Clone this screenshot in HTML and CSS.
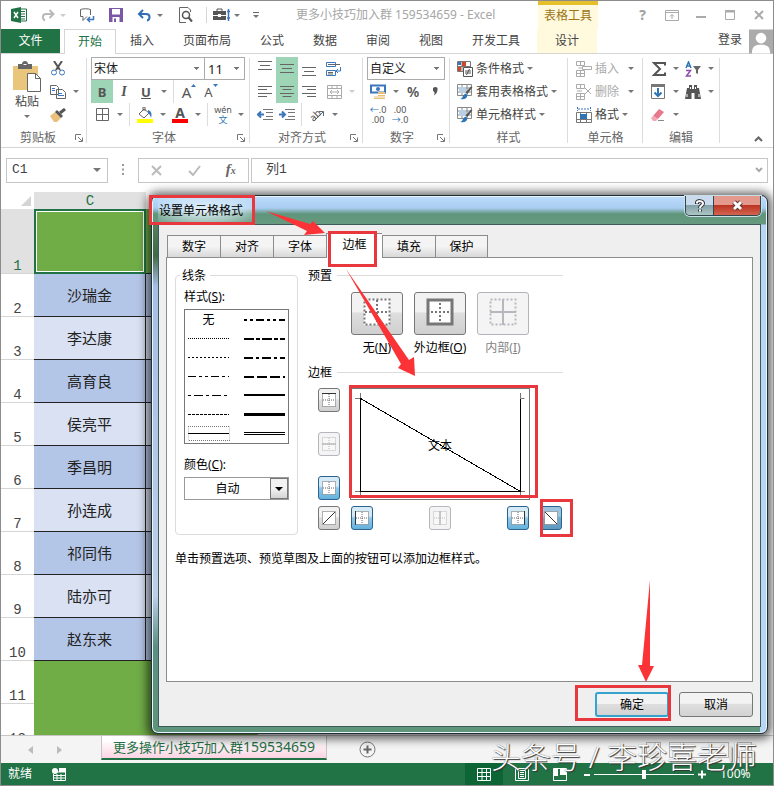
FILE: index.html
```html
<!DOCTYPE html>
<html lang="zh-CN">
<head>
<meta charset="utf-8">
<title>更多小技巧加入群 159534659 - Excel</title>
<link rel="stylesheet" href="styles.css">
</head>
<body>
<svg class="defs" aria-hidden="true">
  <symbol id="bx" viewBox="0 0 14 14"><rect x=".5" y=".5" width="13" height="13" fill="#fff" stroke="#666" stroke-dasharray="1 1"/><path d="M7 1v12M1 7h12" stroke="#666" stroke-dasharray="1 1"/></symbol>
  <symbol id="launch" viewBox="0 0 8 8"><path d="M.5 6V.5H6M3 3l4 4M7.500 3.500v4h-4" fill="none" stroke="#777"/></symbol>
  <symbol id="brushcell" viewBox="0 0 16 16"><path d="M.5.5h14v11H.500zM.500 4h14M.500 8h14M5 .500v11M10 .500v11" fill="#fff" stroke="#888"/><path d="M2 3h7v6H2z" fill="#b9cfe6"/><path d="M15.500 3l-5 7-2-1.500 5.500-6z" fill="#555"/><path d="M3 15c3 0 2-4 5.500-5.500l2 1.500C10 15 7 16 3 15z" fill="#2f75b5"/></symbol>
</svg>
<div class="app">
  <header class="titlebar">
    <div class="quick">
      <svg class="logo" width="16" height="16" viewBox="0 0 16 16"><path d="M9 2h6.500v12H9" fill="#fff" stroke="#217346"/><path d="M10 4.500h4M10 7h4M10 9.500h4M10 12h4" stroke="#217346"/><path d="M0 2l10-2v16L0 14z" fill="#217346"/><path d="M3 5l4 6M7 5l-4 6" stroke="#fff" stroke-width="1.500"/></svg>
      <button class="q redo" aria-label="恢复"><svg width="14" height="13" viewBox="0 0 14 13"><path d="M12 5H5C1 5 1 10 4 11.500M8.500 1L12.500 5 8.500 9" fill="none" stroke="#b9b9b9" stroke-width="2"/></svg><i class="tri pale"></i></button>
      <button class="q touch" aria-label="批注"><svg width="16" height="15" viewBox="0 0 16 15"><path d="M11.500 7V1.500C9 .5 4 .5 1.500 1.500v7H4v4l4-4" fill="none" stroke="#666"/><path d="M14.500 8v3.500H9M11 9l-2.500 2.500L11 14" fill="none" stroke="#3b76bd" stroke-width="1.500"/></svg></button>
      <button class="q save" aria-label="保存"><svg width="14" height="14" viewBox="0 0 14 14"><path d="M0 0h14v14H0z" fill="#7b57a7"/><path d="M3 1h8v5.500H3zM3.500 9h7v5h-7z" fill="#fff"/><path d="M5 10.500h2V14H5z" fill="#7b57a7"/></svg></button>
      <button class="q undo" aria-label="撤消"><svg width="15" height="13" viewBox="0 0 15 13"><path d="M2 5h7c5 0 4 6 1 6.500M6 1L2 5l4 4" fill="none" stroke="#2f6db5" stroke-width="2"/></svg><i class="tri"></i></button>
      <button class="q preview" aria-label="打印预览"><svg width="15" height="16" viewBox="0 0 15 16"><path d="M12.500 5V3l-2.500-2.500H1.500v15H8" fill="none" stroke="#666"/><circle cx="8" cy="8" r="3.500" fill="none" stroke="#555" stroke-width="1.500"/><path d="M10.500 10.500L14 14.500" stroke="#555" stroke-width="2"/></svg></button>
      <span class="rule"></span>
      <button class="q tools" aria-label="工具"><svg width="18" height="14" viewBox="0 0 18 14"><path d="M0 3h13v4H0zM0 8h13v4H0z" fill="#555"/><path d="M4 3V1h5v2" fill="none" stroke="#555"/><path d="M5 6h3v3H5z" fill="#fff"/><path d="M15.500 1v12M14 3.500h3M14 10h3" stroke="#3b76bd" stroke-width="1.500"/></svg><i class="tri"></i></button>
      <button class="q more" aria-label="自定义快速访问工具栏"><i class="bar"></i><i class="tri"></i></button>
      <h1 class="doc">更多小技巧加入群 159534659 - Excel</h1>
    </div>
    <div class="context">表格工具</div>
    <div class="winbtns">
      <button aria-label="帮助"><b>?</b></button>
      <button aria-label="功能区显示选项"><svg width="14" height="11" viewBox="0 0 14 11"><path d="M.5.500h13v10H.500zM.500 2.500h13M7 9V4.500M5 6.500l2-2 2 2" fill="none" stroke="#aaa"/></svg></button>
      <button aria-label="最小化"><svg width="10" height="11" viewBox="0 0 10 11"><path d="M0 7h10" stroke="#aaa" stroke-width="2"/></svg></button>
      <button aria-label="最大化"><svg width="10" height="10" viewBox="0 0 10 10"><path d="M.5.500h9v9h-9z" fill="none" stroke="#aaa"/><path d="M0 1.500h10" stroke="#aaa" stroke-width="2"/></svg></button>
      <button aria-label="关闭"><svg width="10" height="10" viewBox="0 0 10 10"><path d="M1 1l8 8M9 1L1 9" stroke="#aaa" stroke-width="2"/></svg></button>
    </div>
  </header>

  <nav class="tabs">
    <button class="file">文件</button>
    <button class="home">开始</button>
    <button>插入</button><button>页面布局</button><button>公式</button><button>数据</button><button>审阅</button><button>视图</button><button>开发工具</button>
    <button class="design">设计</button>
    <a class="signin" href="#">登录</a>
    <svg class="avatar" width="24" height="25" viewBox="0 0 25 25"><path d="M0 0h25v25H0z" fill="#ababab"/><circle cx="12.500" cy="9" r="5.500" fill="#fff"/><path d="M3 25c0-8 4-9 9.500-9s9.500 1 9.500 9z" fill="#fff"/></svg>
  </nav>

  <section class="ribbon">
    <div class="group clip">
      <div class="cliprow">
        <button class="paste"><svg width="29" height="32" viewBox="0 0 29 32"><path d="M0 5h25v24H0z" fill="#eac67c"/><path d="M5 8V3h4c0-4 6-4 6 0h4v5z" fill="#666"/><path d="M10.500 3.500h3" stroke="#fff"/><path d="M14.500 12.500h8l5 5v13h-13z" fill="#fff" stroke="#666"/><path d="M22.500 12.500v5h5" fill="none" stroke="#666"/></svg><span>粘贴</span><i class="tri"></i></button>
        <div class="stack">
          <div class="row"><button class="ib" aria-label="剪切"><svg width="14" height="15" viewBox="0 0 14 15"><path d="M3 0l6 9M11 0L5 9" stroke="#555" stroke-width="2"/><circle cx="3" cy="11.500" r="2.500" fill="none" stroke="#3b76bd"/><circle cx="11" cy="11.500" r="2.500" fill="none" stroke="#3b76bd"/></svg></button></div>
          <div class="row"><button class="ib" aria-label="复制"><svg width="16" height="14" viewBox="0 0 16 14"><path d="M.5.500h6l2 2v7h-8zM6.500 4.500h6l3 3v6h-9z" fill="#fff" stroke="#666"/><path d="M2 3.500h3M2 5.500h3M8 8.500h4M8 10.500h6" stroke="#3b76bd"/></svg></button><button class="dd" aria-label="复制选项"></button></div>
          <div class="row"><button class="ib" aria-label="格式刷"><svg width="16" height="14" viewBox="0 0 16 14"><path d="M0 8l5-4 6 6-4 4H4z" fill="#eac07a"/><path d="M5 4l2-2 6 6-2 2z" fill="#555"/><path d="M10 5l5-4" stroke="#555" stroke-width="3"/></svg></button></div>
        </div>
      </div>
      <div class="cap"><span>剪贴板</span><svg width="8" height="8"><use href="#launch"/></svg></div>
    </div>

    <div class="group">
      <div class="row"><select class="font" aria-label="字体"><option>宋体</option></select><select class="size" aria-label="字号"><option>11</option></select></div>
      <div class="row"><button class="ib on bold">B</button><button class="ib ital">I</button><button class="ib und">U</button><button class="dd" aria-label="下划线选项"></button><span class="vr"></span><button class="ib big" aria-label="增大字号">A<svg width="5" height="4"><path d="M0 3l2.500-3L5 3z" fill="#3b76bd"/></svg></button><button class="ib small" aria-label="减小字号">A<svg width="5" height="4"><path d="M0 0l2.500 3L5 0z" fill="#3b76bd"/></svg></button></div>
      <div class="row"><button class="ib" aria-label="边框"><svg width="13" height="13"><path d="M.5.500h12v12H.500zM6.500 0v13M0 6.500h13" fill="none" stroke="#666"/></svg></button><button class="dd" aria-label="边框选项"></button><span class="vr"></span><button class="ib" aria-label="填充颜色"><svg width="16" height="16" viewBox="0 0 16 16"><path d="M0 12h16v4H0z" fill="#ff0"/><path d="M7 2L2 7l5 4 5-5zM6 4V0h2v4" fill="#fff" stroke="#666"/><path d="M11 3c4 1 4 5 3 8-1-4-2-4-3-4z" fill="#3b76bd"/></svg></button><button class="dd" aria-label="填充选项"></button><button class="ib fc" aria-label="字体颜色">A</button><button class="dd" aria-label="字体颜色选项"></button><span class="vr"></span><button class="ib wen"><span>wén</span><em>文</em></button><button class="dd" aria-label="拼音选项"></button></div>
      <div class="cap"><span>字体</span><svg width="8" height="8"><use href="#launch"/></svg></div>
    </div>

    <div class="group">
      <div class="row"><button class="ib" aria-label="顶端对齐"><svg width="14" height="15"><path d="M0 .5h14M2 4.500h10M0 8.500h14" stroke="#666"/></svg></button><button class="ib on" aria-label="垂直居中"><svg width="14" height="15"><path d="M0 3.500h14M2 7.500h10M0 11.500h14" stroke="#666"/></svg></button><button class="ib" aria-label="底端对齐"><svg width="14" height="15"><path d="M0 6.500h14M2 10.500h10M0 14.500h14" stroke="#666"/></svg></button><button class="ib wrap" aria-label="自动换行"><svg width="16" height="16" viewBox="0 0 16 16"><path d="M.500 1.500h9v4h-9zM.500 9.500h9v5h-9z" fill="none" stroke="#3b76bd"/><path d="M2 3.500h12M2 11.500h5M2 13h5" stroke="#666"/><path d="M14.500 6v4H10M12 8l-2 2 2 2" fill="none" stroke="#3b76bd"/></svg></button></div>
      <div class="row"><button class="ib" aria-label="左对齐"><svg width="14" height="11"><path d="M0 .5h14M0 3.500h9M0 7.500h14M0 10.500h9" stroke="#666"/></svg></button><button class="ib on" aria-label="居中"><svg width="14" height="11"><path d="M0 .5h14M2.500 3.500h9M0 7.500h14M2.500 10.500h9" stroke="#666"/></svg></button><button class="ib" aria-label="右对齐"><svg width="14" height="11"><path d="M0 .5h14M5 3.500h9M0 7.500h14M5 10.500h9" stroke="#666"/></svg></button><button class="ib wrap" aria-label="合并后居中"><svg width="15" height="14"><path d="M.5.500h14v13H.500zM0 3.500h15M0 10.500h15M5 0v3M10 0v3M5 11v3M10 11v3M3 7h9M5 5L3 7l2 2M10 5l2 2-2 2" fill="none" stroke="#aaa"/></svg></button><button class="dd off" aria-label="合并选项"></button></div>
      <div class="row"><button class="ib" aria-label="减少缩进"><svg width="16" height="11"><path d="M6 .500h10M9 3.500h7M9 7.500h7M6 10.500h10" stroke="#777"/><path d="M7 5.500H1M4 2.500l-3 3 3 3" fill="none" stroke="#3b76bd" stroke-width="2"/></svg></button><button class="ib" aria-label="增加缩进"><svg width="16" height="11"><path d="M6 .500h10M9 3.500h7M9 7.500h7M6 10.500h10" stroke="#777"/><path d="M0 5.500h6M3 2.500l3 3-3 3" fill="none" stroke="#3b76bd" stroke-width="2"/></svg></button><span class="vr"></span><button class="ib orient" aria-label="方向"><span>ab</span><svg width="14" height="12"><path d="M3 12L12 3M8 2.500h4.500V7" fill="none" stroke="#666"/></svg></button><button class="dd" aria-label="方向选项"></button></div>
      <div class="cap"><span>对齐方式</span><svg width="8" height="8"><use href="#launch"/></svg></div>
    </div>

    <div class="group">
      <div class="row"><select class="num" aria-label="数字格式"><option>自定义</option></select></div>
      <div class="row"><button class="ib" aria-label="会计数字格式"><svg width="16" height="16" viewBox="0 0 16 16"><path d="M1 1.500h14v7H1z" fill="#fff" stroke="#3b76bd" stroke-width="2"/><circle cx="8" cy="5" r="2" fill="#3b76bd"/><path d="M8 8h7v7H4v-3h4z" fill="#eac07a"/><path d="M8 10.500h7M4 13h11" stroke="#fff"/></svg></button><button class="dd" aria-label="会计选项"></button><button class="ib pct">%</button><button class="ib comma" aria-label="千位分隔样式"><svg width="5" height="9"><path d="M0 1q2.500-2 4.500 0Q5 6 1 8.500 2.500 5 0 4z" fill="#555"/></svg></button></div>
      <div class="row"><button class="ib dec"><span><em>←</em>.0</span><span>.00</span></button><button class="ib dec"><span>.00</span><span><em>→</em>.0</span></button></div>
      <div class="cap"><span>数字</span><svg width="8" height="8"><use href="#launch"/></svg></div>
    </div>

    <div class="group wide">
      <div class="row"><button class="tb"><svg width="16" height="16"><path d="M.5.500h13v10H.500zM0 5.500h14M5 0v10" fill="#fff" stroke="#777"/><path d="M5 1h4v4H5zM1 6h3v4H1z" fill="#d24726"/><path d="M1 1h3v3H1z" fill="#3b76bd"/><path d="M6.500 6.500h9v9h-9z" fill="#fff" stroke="#555"/><path d="M8 10h6M8 12h6M12.500 8l-3 6" stroke="#555"/></svg>条件格式<i class="tri"></i></button></div>
      <div class="row"><button class="tb"><svg width="16" height="16"><use href="#brushcell"/></svg>套用表格格式<i class="tri"></i></button></div>
      <div class="row"><button class="tb"><svg width="16" height="16"><use href="#brushcell"/></svg>单元格样式<i class="tri"></i></button></div>
      <div class="cap"><span>样式</span></div>
    </div>

    <div class="group wide cells">
      <div class="row"><button class="tb dim"><svg width="16" height="16"><path d="M.5.500h8v4h-8zM4.500.500v4M.500 9.500h8v6h-8zM4.500 9.500v6M.500 12.500h8M2.500 7H6M6.500 5.500h9v3h-9z" fill="none" stroke="#aaa"/></svg>插入<i class="tri"></i></button></div>
      <div class="row"><button class="tb dim"><svg width="16" height="16"><path d="M.5.500h8v4h-8zM4.500.500v4M.500 9.500h8v6h-8zM4.500 9.500v6M.500 12.500h8M1 7h5M9 4l6 6M15 4l-6 6" fill="none" stroke="#aaa"/></svg>删除<i class="tri"></i></button></div>
      <div class="row"><button class="tb"><svg width="16" height="16"><path d="M1.500 0v4M14.500 0v4M2 2h11" stroke="#3b76bd" stroke-dasharray="2 1"/><path d="M.500 5.500h15v10H.500zM4.500 5v10M10.500 5v10M0 12.500h15" fill="#fff" stroke="#777"/><path d="M4 7h7v5H4z" fill="#2f75b5"/></svg>格式<i class="tri"></i></button></div>
      <div class="cap"><span>单元格</span></div>
    </div>

    <div class="group">
      <div class="row"><button class="ib" aria-label="自动求和"><svg width="15" height="16"><path d="M14 4.500V2H3l6 6-6 6h11v-2.500" fill="none" stroke="#555" stroke-width="2"/></svg></button><button class="dd" aria-label="求和选项"></button><button class="ib az" aria-label="排序和筛选"><svg width="16" height="16"><path d="M1 7l2.500-6L6 7M2 5h3" fill="none" stroke="#2f75b5" stroke-width="1.500"/><path d="M1 9.500h4.500L1.500 15H6" fill="none" stroke="#8a4fb0" stroke-width="1.500"/><path d="M8 5h8l-3 4v4l-2-1V9z" fill="#666"/></svg></button><button class="dd" aria-label="排序选项"></button></div>
      <div class="row"><button class="ib" aria-label="填充"><svg width="14" height="15"><path d="M.5.500h13v14H.500z" fill="#fff" stroke="#777"/><path d="M0 0h14v3H0z" fill="#777"/><path d="M7 4v8M3.500 8.500L7 12l3.500-3.500" fill="none" stroke="#2f75b5" stroke-width="2"/></svg></button><button class="dd" aria-label="填充选项"></button><button class="ib az" aria-label="查找和选择"><svg width="16" height="14"><path d="M2 3h2V0h3v4h2V0h3v3h2l2 11H9.500V8h-3v6H0z" fill="#555"/><path d="M2 9v3M14 9v3M5.500 2v2M10.500 2v2" stroke="#fff"/></svg></button><button class="dd" aria-label="查找选项"></button></div>
      <div class="row"><button class="ib" aria-label="清除"><svg width="14" height="13"><path d="M8 1l5 3-6 7-5-3z" fill="#e8788c"/><path d="M2 8l5 3-2 2H2L0 10z" fill="#f3a9b5"/><path d="M7 12.500h6" stroke="#888"/></svg></button><button class="dd" aria-label="清除选项"></button></div>
      <div class="cap"><span>编辑</span></div>
    </div>
    <button class="collapse" aria-label="折叠功能区"><svg width="9" height="6"><path d="M1 5l3.500-3.500L8 5" fill="none" stroke="#666" stroke-width="2"/></svg></button>
  </section>

  <section class="formula">
    <label class="namebox"><input value="C1" aria-label="名称框"><i class="tri wide-tri"></i></label>
    <svg width="2" height="12"><path d="M0 1h2M0 5.500h2M0 10h2" stroke="#999" stroke-width="2"/></svg>
    <div class="fx"><button aria-label="取消"><svg width="12" height="11"><path d="M1 1l9 9M10 1l-9 9" stroke="#bbb" stroke-width="2"/></svg></button><button aria-label="输入"><svg width="13" height="11"><path d="M1 6l4 4 7-9" fill="none" stroke="#bbb" stroke-width="2"/></svg></button><button class="fn">f<small>x</small></button></div>
    <label class="bar-input"><input value="列1" aria-label="编辑栏"><svg width="8" height="6"><path d="M1 1l3 3 3-3" fill="none" stroke="#aaa" stroke-width="2"/></svg></label>
  </section>

  <main class="sheet">
    <table>
      <colgroup><col class="c-num"><col class="c-c"><col class="c-c"><col></colgroup>
      <thead><tr><th class="corner"><svg width="10" height="10"><path d="M10 0v10H0z" fill="#d4d4d4"/></svg></th><th class="col">C</th><th></th><th></th></tr></thead>
      <tbody>
        <tr class="first"><th>1</th><td class="sel"></td><td></td></tr>
        <tr class="a"><th>2</th><td>沙瑞金</td><td></td></tr>
        <tr class="b"><th>3</th><td>李达康</td><td></td></tr>
        <tr class="a"><th>4</th><td>高育良</td><td></td></tr>
        <tr class="b"><th>5</th><td>侯亮平</td><td></td></tr>
        <tr class="a"><th>6</th><td>季昌明</td><td></td></tr>
        <tr class="b"><th>7</th><td>孙连成</td><td></td></tr>
        <tr class="a"><th>8</th><td>祁同伟</td><td></td></tr>
        <tr class="b"><th>9</th><td>陆亦可</td><td></td></tr>
        <tr class="a"><th>10</th><td>赵东来</td><td></td></tr>
        <tr class="g"><th>11</th><td></td><td></td></tr>
        <tr class="g"><th>12</th><td></td><td></td></tr>
      </tbody>
    </table>
  </main>

  <footer class="sheets">
    <button class="nav" aria-label="上一个"><svg width="5" height="8"><path d="M5 0v8L0 4z" fill="#bbb"/></svg></button>
    <button class="nav" aria-label="下一个"><svg width="5" height="8"><path d="M0 0v8l5-4z" fill="#bbb"/></svg></button>
    <button class="tab">更多操作小技巧加入群<span>159534659</span></button>
    <button class="add" aria-label="新工作表"><svg width="17" height="17"><circle cx="8.500" cy="8.500" r="7.500" fill="none" stroke="#777"/><path d="M8.500 4.500v8M4.500 8.500h8" stroke="#666" stroke-width="2"/></svg></button>
    <div class="hscroll"><i></i><i class="thumb"></i><i></i></div>
  </footer>

  <footer class="status">
    <span>就绪</span>
    <svg class="macro" width="14" height="13"><path d="M4 4h9.500v8.500h-12V6M2 7.500h11M2 10h11M5 6v6M9 6v6" fill="none" stroke="#fff"/><circle cx="3" cy="3" r="3" fill="#fff"/><path d="M7 0h7v4H7z" fill="#fff"/></svg>
    <div class="views">
      <button class="cur" aria-label="普通"><svg width="14" height="13"><path d="M.5.500h13v12H.500zM0 4.500h14M0 8.500h14M5 0v13M9.500 0v13" fill="none" stroke="#fff"/></svg></button>
      <button aria-label="页面布局"><svg width="14" height="13"><path d="M.5.500h13v12H.500zM3.500 2.500h7v8h-7zM5 4.500h4M5 6.500h4M5 8.500h4" fill="none" stroke="#fff"/></svg></button>
      <button aria-label="分页预览"><svg width="14" height="13"><path d="M.5.500h13v12H.500z" fill="none" stroke="#fff"/><path d="M1 1h4v7H1zM7 1h6v6H7z" fill="#fff"/></svg></button>
    </div>
    <button class="zm" aria-label="缩小"><svg width="6" height="9"><path d="M0 5h6" stroke="#fff" stroke-width="2"/></svg></button>
    <input class="zoom" type="range" min="0" max="100" value="50" aria-label="缩放">
    <button class="zm" aria-label="放大"><svg width="9" height="9"><path d="M0 4.500h8M4 .500v8" stroke="#fff" stroke-width="2"/></svg></button>
    <span class="pct100">100%</span>
  </footer>

  <section class="dialog" role="dialog" aria-labelledby="dlg">
    <header class="dtitle"><h2 id="dlg">设置单元格格式</h2><div class="dbtns"><button class="help" aria-label="帮助"><svg width="12" height="14"><path d="M3 5V3.500C3 1.500 9 1.500 9 4.500 9 6.500 6 6.500 6 9M6 10.500v2" fill="none" stroke="#333" stroke-width="4"/><path d="M3 4.500V3.500C3 1.500 9 1.500 9 4.500 9 6.500 6 6.500 6 9M6 10.500v2" fill="none" stroke="#fff" stroke-width="2"/></svg></button><button class="close" aria-label="关闭"><svg width="13" height="11"><path d="M3 2l7 7M10 2L3 9" stroke="#633" stroke-width="5"/><path d="M3 2l7 7M10 2L3 9" stroke="#fff" stroke-width="3"/></svg></button></div></header>
    <div class="client">
      <div class="dtabs" role="tablist"><button>数字</button><button>对齐</button><button>字体</button><button class="active">边框</button><button>填充</button><button>保护</button></div>
      <div class="page">
        <div class="cols">
          <fieldset class="lines">
            <legend>线条</legend>
            <p>样式(<u>S</u>):</p>
            <div class="styles" role="listbox" aria-label="样式">
              <span class="none">无</span><svg><path d="M0 10h41" stroke-width="2" stroke-dasharray="3 3 3 3 8 3"/></svg>
              <svg><path d="M0 9.500h41" stroke-dasharray="1 1"/></svg><svg><path d="M0 10h41" stroke-width="2" stroke-dasharray="10 2 4 2"/></svg>
              <svg><path d="M0 9.500h41" stroke-dasharray="2 2"/></svg><svg><path d="M0 10h41" stroke-width="2" stroke-dasharray="9 3 3 3"/></svg>
              <svg><path d="M0 9.500h41" stroke-dasharray="8 3 3 3 3 3"/></svg><svg><path d="M0 10h41" stroke-width="2" stroke-dasharray="10 3"/></svg>
              <svg><path d="M0 9.500h41" stroke-dasharray="3 3 9 3"/></svg><svg><path d="M0 9h41" stroke-width="2"/></svg>
              <svg><path d="M0 9.500h41" stroke-dasharray="3 1"/></svg><svg><path d="M0 9.500h41" stroke-width="3"/></svg>
              <svg class="picked"><path d="M0 9.500h41"/><rect x="0" y="2.500" width="42" height="14" fill="none" stroke="#777" stroke-dasharray="1 1"/></svg><svg><path d="M0 8.500h41M0 10.500h41"/></svg>
            </div>
            <label for="clr">颜色(<u>C</u>):</label>
            <div class="clr"><select id="clr"><option>自动</option></select><span></span></div>
          </fieldset>
          <div class="right">
            <div class="head">预置</div>
            <div class="presets">
              <div><button id="p1" class="pb"><svg width="28" height="28"><rect x="1" y="1" width="26" height="26" fill="#fff"/><path d="M1.500 1.500h25v25h-25zM14 2v24M2 14h24" fill="none" stroke="#777" stroke-width="2" stroke-dasharray="2 2"/></svg></button><label for="p1">无(<u>N</u>)</label></div>
              <div><button id="p2" class="pb"><svg width="28" height="28"><rect x="2" y="2" width="24" height="24" fill="#fff" stroke="#777" stroke-width="3"/><path d="M14 5v18M5 14h18" stroke="#777" stroke-width="2" stroke-dasharray="2 2"/></svg></button><label for="p2">外边框(<u>O</u>)</label></div>
              <div class="disabled"><button id="p3" class="pb" disabled><svg width="28" height="28"><path d="M1.500 1.500h25v25h-25z" fill="none" stroke="#bab6be" stroke-width="2" stroke-dasharray="2 2"/><path d="M14 1v26M1 14h26" stroke="#bab6be" stroke-width="2"/></svg></button><label for="p3">内部(<u>I</u>)</label></div>
            </div>
            <div class="head">边框</div>
            <div class="borders">
              <div class="vcol">
                <button class="sb" aria-label="上边框"><svg width="14" height="14"><use href="#bx"/><path d="M0 .500h14" stroke="#333"/></svg></button>
                <button class="sb off" disabled aria-label="水平内边框"><svg width="14" height="14"><use href="#bx"/><path d="M0 7h14" stroke="#333"/></svg></button>
                <button class="sb down" aria-label="下边框"><svg width="14" height="14"><use href="#bx"/></svg></button>
              </div>
              <svg class="pv" viewBox="0 0 180 112"><g fill="none" stroke="#777"><rect x=".5" y=".5" width="179" height="111"/><path d="M5 10.500h5.500V5M170.500 5v5.500h4M5 103.500h5.500v4M175 103.500h-4.500v4"/></g><path d="M10.500 11v92M170.500 11v92M10 103.500h161M10.500 10.500l160 93" stroke="#000" fill="none" shape-rendering="crispEdges"/><text x="90" y="62" text-anchor="middle">文本</text></svg>
              <button class="sb diag" aria-label="斜线上"><svg width="14" height="14"><rect x=".5" y=".5" width="13" height="13" fill="#fff" stroke="#666" stroke-dasharray="1 1"/><path d="M1 13L13 1" stroke="#333"/></svg></button>
              <div class="hrow">
                <button class="sb down" aria-label="左边框"><svg width="14" height="14"><use href="#bx"/><path d="M.5 0v14" stroke="#333"/></svg></button>
                <button class="sb off" disabled aria-label="垂直内边框"><svg width="14" height="14"><use href="#bx"/><path d="M7 0v14" stroke="#333"/></svg></button>
                <button class="sb down" aria-label="右边框"><svg width="14" height="14"><use href="#bx"/><path d="M13.500 0v14" stroke="#333"/></svg></button>
              </div>
              <button class="sb down focus" aria-label="斜线下"><svg width="14" height="14"><rect x=".5" y=".5" width="13" height="13" fill="#fff" stroke="#666" stroke-dasharray="1 1"/><path d="M1 1l12 12" stroke="#333"/></svg></button>
            </div>
          </div>
        </div>
        <p class="hint">单击预置选项、预览草图及上面的按钮可以添加边框样式。</p>
      </div>
      <div class="actions"><button class="ok">确定</button><button>取消</button></div>
    </div>
  </section>

  <svg class="marks" width="774" height="786" aria-hidden="true">
    <g fill="none" stroke="#e8383d" stroke-width="3"><path d="M150.500 196.500h103v27h-103zM329.500 232.500h46v33h-46zM350.500 386.500h186v110h-186zM541.500 500.500h30v35h-30zM576.500 686.500h93v33h-93z"/></g>
    <g fill="#fb3336"><path d="M266 211L310 224 313 221 325 233 304 235 307 231zM346 269L409 360 414 357 415 376 398 368 401 364zM650 580L650 666 654 666 646 682 638 665 642 665z"/></g>
  </svg>
  <div class="stamp">头条号 / 李珍喜老师</div>
</div>
</body>
</html>
```
FILE: styles.css
```css
* { box-sizing: border-box; }
body { margin: 0; overflow: hidden; font: 12px/16px "Noto Sans", "Noto Sans CJK SC", sans-serif; color: #444; }
button, input, select { font: inherit; color: inherit; border: 0; padding: 0; margin: 0; background: none; border-radius: 0; outline: 0; }
svg { display: block; flex: none; }
.defs { position: absolute; width: 0; height: 0; }
.app { position: relative; display: flex; flex-direction: column; height: 100vh; border: 1px solid #8c8c8c; background: #fff; overflow: hidden; }
.tri { display: inline-block; border: 3px solid transparent; border-top-color: #777; border-bottom: 0; }
.tri.pale { border-top-color: #ccc; }

/* Title bar */
.titlebar { display: flex; height: 28px; flex: none; }
.quick { display: flex; align-items: center; width: 537px; flex: none; padding-left: 10px; }
.q { display: flex; align-items: center; gap: 5px; height: 28px; }
.redo { margin-left: 14px; }
.touch { margin-left: 13px; }
.save { margin-left: 14px; }
.undo { margin-left: 14px; }
.preview { margin-left: 15px; }
.rule { width: 1px; height: 16px; margin: 0 6px 0 13px; background: #d5d5d5; }
.tools { gap: 3px; }
.more { flex-direction: column; justify-content: center; gap: 2px; margin-left: 13px; }
.bar { width: 6px; height: 1px; background: #666; }
.doc { margin: 0 0 0 37px; font-size: 12px; font-weight: 400; color: #a6a6a6; white-space: nowrap; }
.context { width: 60px; flex: none; border-top: 4px solid #e6c02c; background: #fff9de; color: #9c7416; text-align: center; line-height: 22px; }
.winbtns { display: flex; align-items: center; margin-left: auto; }
.winbtns button { display: flex; align-items: center; justify-content: center; width: 29px; height: 28px; color: #a0a0a0; font-size: 14px; }

/* Ribbon tabs */
.tabs { display: flex; gap: 1px; height: 25px; flex: none; border-bottom: 1px solid #d5d5d5; }
.tabs button { padding: 0 14px; white-space: nowrap; }
.tabs .file { width: 59px; background: #217346; color: #fff; }
.tabs .home { width: 52px; height: 25px; margin-left: 3px; padding: 0 0 1px; border: 1px solid #d5d5d5; border-bottom: 0; background: #fff; color: #217346; }
.tabs button:nth-child(3) { margin-left: -1px; }
.tabs .design { width: 60px; margin-left: 2px; padding: 0; background: #fff9de; }
.signin { margin-left: auto; color: #444; text-decoration: none; line-height: 22px; }
.avatar { margin-left: 6px; }

/* Ribbon */
.ribbon { position: relative; display: grid; grid-template-columns: 86px 163px 113px 87px 118px 75px 77px 1fr; height: 94px; flex: none; border-bottom: 1px solid #d5d5d5; }
.group { position: relative; padding: 3px 0 0 4px; }
.group::after { content: ""; position: absolute; right: 0; top: 4px; bottom: 4px; width: 1px; background: #dcdcdc; }
.row { display: flex; align-items: center; height: 23px; }
.ib { display: flex; align-items: center; justify-content: center; width: 22px; height: 23px; flex: none; color: #555; }
.on { background: #9fd5b7; }
.dd { width: 13px; height: 23px; display: flex; align-items: center; justify-content: center; }
.dd::after { content: ""; border: 3px solid transparent; border-top-color: #777; border-bottom: 0; }
.dd.off::after { border-top-color: #ccc; }
.vr { width: 1px; height: 23px; margin: 0 4px 0 3px; background: #dcdcdc; }
.cap { display: flex; align-items: center; height: 21px; padding: 2px 5px 0 0; color: #666; }
.cap span { flex: 1; text-align: center; }
.clip { padding-left: 0; }
.clip .cap { padding-right: 4px; }
.cliprow { display: flex; }
.paste { display: flex; flex-direction: column; align-items: center; width: 46px; height: 69px; padding: 4px 0 0 6px; }
.paste span { line-height: 18px; }
.paste .tri { margin-top: 4px; }
.ribbon select { height: 23px; padding: 0 4px; border: 1px solid #ababab; appearance: none; color: #222; background: linear-gradient(#777, #777) right 5px top 9px / 5px 1px no-repeat, linear-gradient(#777, #777) right 6px top 10px / 3px 1px no-repeat, linear-gradient(#777, #777) right 7px top 11px / 1px 1px no-repeat, #fff; }
.ribbon select.font { width: 114px; padding-left: 2px; }
.ribbon select.size { width: 41px; margin-left: -1px; padding-left: 3px; }
.ribbon select.num { width: 78px; padding-left: 2px; }
.ribbon select.size, .bold, .ital, .und { font-size: 13px; }
.bold { font-weight: 700; }
.ital { font-family: "Liberation Serif", serif; font-style: italic; font-weight: 700; font-size: 14px; }
.und { font-weight: 700; text-decoration: underline; }
.big, .small { align-items: center; font-size: 15px; }
.small { font-size: 13px; }
.big svg, .small svg { align-self: flex-start; margin-top: 4px; }
.fc { height: 17px; border-bottom: 4px solid #f00; width: 16px; margin: 0 3px; font-size: 14px; line-height: 14px; font-weight: 700; }
.wen { flex-direction: column; font-size: 9px; line-height: 10px; }
.wen em { color: #2f75b5; font-style: normal; }
.wrap { margin-left: 3px; }
.orient { font-size: 10px; }
.orient span { transform: rotate(-45deg); margin-right: -9px; }
.pct { font-size: 14px; font-weight: 600; }
.dec { flex-direction: column; align-items: center; font-size: 9px; line-height: 10px; }
.dec em { color: #2f75b5; font-style: normal; }
.wide { padding-left: 7px; }
.cells { padding-left: 8px; }
.tb { display: flex; align-items: center; gap: 3px; height: 23px; white-space: nowrap; }
.dim { color: #aaa; }
.cells .dim .tri { margin-left: 6px; }
.wide .cap { padding-right: 8px; }
.collapse { align-self: end; justify-self: end; padding: 0 10px 5px 0; }

/* Formula bar */
.formula { display: flex; align-items: center; gap: 14px; height: 44px; flex: none; padding: 0 5px; font-family: "Liberation Mono", "Noto Sans CJK SC", monospace; font-size: 13px; }
.formula input { flex: 1; min-width: 0; width: 0; }
.namebox, .fx, .bar-input { display: flex; align-items: center; height: 25px; border: 1px solid #c6c6c6; }
.namebox { width: 102px; padding: 0 6px 0 5px; }
.wide-tri { border-width: 4px 4px 0; }
.fx { width: 111px; justify-content: space-around; }
.fn { font: italic 700 15px/20px "Liberation Serif", serif; color: #666; }
.fn small { font-size: 10px; }
.bar-input { flex: 1; margin-left: -12px; padding: 0 4px 0 14px; }

/* Worksheet */
.sheet { flex: 1; min-height: 0; overflow: hidden; background: #fff; }
table { width: 100%; table-layout: fixed; border-collapse: separate; border-spacing: 0; }
.c-num { width: 33px; }
.c-c { width: 112px; }
th, td { padding: 0; }
thead th { height: 17px; font: 14px/16px "Liberation Mono", monospace; color: #217346; }
.corner { text-align: right; }
.corner svg { margin-left: auto; margin-right: 3px; }
.col { background: #e1e1e1; }
tbody tr { height: 43px; }
tbody th { height: 43px; border-bottom: 1px solid #d5d5d5; vertical-align: bottom; font: 14px/13px "Liberation Mono", monospace; color: #444; text-align: center; }
tbody td { border-right: 1px solid #222; border-bottom: 1px solid #222; text-align: center; font-size: 15px; color: #222; }
.first th { height: 65px; background: #e1e1e1; color: #217346; }
.first td { background: #70ad47; }
.first .sel { border: 2px solid #217346; box-shadow: inset 0 0 0 1px #fff; }
.a td { background: #b4c6e7; }
.b td { background: #d9e1f2; }
.g td { background: #70ad47; border: 0; }

/* Sheet tabs and status bar */
.sheets { display: flex; align-items: center; height: 28px; flex: none; background: #f4f4f4; border-top: 1px solid #c6c6c6; padding-left: 27px; }
.nav { width: 5px; margin-right: 24px; }
.tab { width: 226px; height: 24px; align-self: flex-start; margin-left: 15px; border: 1px solid #c6c6c6; border-top: 0; border-bottom: 2px solid #217346; background: linear-gradient(#fff 20%, #fbd3e2); color: #217346; font-size: 13px; white-space: nowrap; }
.tab span { font-size: 14px; }
.add { margin-left: 32px; }
.hscroll { display: flex; gap: 8px; margin-left: auto; margin-right: 21px; }
.hscroll i { width: 15px; height: 16px; border: 1px solid #b5b5b5; }
.hscroll .thumb { width: 60px; }
.status { display: flex; align-items: center; height: 22px; flex: none; background: #217346; color: #fff; padding: 0 20px 0 7px; }
.macro { margin-left: 20px; }
.views { display: flex; margin-left: auto; }
.views button { display: flex; align-items: center; justify-content: center; width: 38px; height: 22px; }
.views .cur { background: #0d6434; }
.zm { margin: 0 4px; }
.views + .zm { margin-left: 5px; }
.zoom { width: 100px; height: 16px; appearance: none; background: linear-gradient(#fff, #fff) center / 100% 1px no-repeat; }
.zoom::-webkit-slider-thumb { appearance: none; width: 4px; height: 9px; background: #fff; }
.pct100 { margin-left: 9px; width: 33px; }

/* Format cells dialog */
.dialog { position: absolute; isolation: isolate; left: 150px; right: 5px; top: 194px; padding: 0 6px 6px; color: #000; border: 1px solid #1f3038; border-radius: 7px; background: linear-gradient(#bcdcfb 0, #a9cdf2 12px, #5f957a 18px, #679a80 28px, transparent 29px), linear-gradient(#5f957a 0, #426a45 60px, #a6bfe6 90px, #bccfea 400px, #5c8f84 450px, #5f957a) left / 7px 100% no-repeat, linear-gradient(#b9d5f5, #b9d5f5) right / 7px 100% no-repeat, #5f957a; box-shadow: inset 0 0 0 1px #e9f4fb, 0 1px 10px 4px rgba(0, 0, 0, .6); }
.dtitle { display: flex; height: 28px; }
.dtitle h2 { margin: 0; padding: 0 9px 0 1px; font-size: 12px; line-height: 29px; font-weight: 400; background: radial-gradient(#e4f1fa, rgba(220, 238, 248, .5) 60%, transparent); white-space: nowrap; }
.dbtns { display: flex; height: 20px; margin-left: auto; border: 1px solid #334650; border-top: 0; border-radius: 0 0 5px 5px; overflow: hidden; box-shadow: 0 0 0 1px #c7dfe8; }
.dbtns button { display: flex; align-items: center; justify-content: center; }
.help { width: 27px; background: linear-gradient(#cadbed 45%, #83a1aa 50%, #adc6c4); }
.close { width: 47px; border-left: 1px solid #334650 !important; background: linear-gradient(#e39a8d 45%, #bc3522 50%, #d26450); }
.client { border: 1px solid #3e5a5a; background: #efefef; padding: 8px 7px 9px 7px; }
.dtabs { display: flex; align-items: flex-end; height: 24px; padding-left: 1px; }
.dtabs button { width: 53px; height: 22px; border: 1px solid #8c8c8c; border-bottom: 0; border-right-width: 0; background: linear-gradient(#f4f4f4 50%, #d8d8d8); }
.dtabs .active { width: 56px; height: 25px; margin-bottom: -1px; padding-bottom: 3px; background: #fff; z-index: 1; }
.dtabs button:last-child { border-right-width: 1px; }
.page { min-height: 425px; border: 1px solid #8c8c8c; background: #fff; padding: 9px 8px; }
.cols { display: flex; gap: 10px; }
.lines { width: 122px; height: 268px; flex: none; margin: 0; padding: 5px 8px 0; border: 1px solid #dcdcdc; border-radius: 4px; }
.lines legend { padding: 0 4px 0 2px; margin-left: -4px; line-height: 17px; }
.lines p { margin: 0 0 4px; }
.lines label { display: block; margin: 13px 0 4px; }
.styles { display: grid; grid-template-columns: 41px 41px; grid-auto-rows: 19px; column-gap: 15px; width: 105px; padding-left: 3px; border: 1px solid #777; }
.styles svg { width: 42px; height: 19px; stroke: #000; }
.none { text-align: center; line-height: 19px; }
.clr { display: flex; width: 105px; height: 23px; border: 1px solid #999; }
.clr select { flex: 1; min-width: 0; appearance: none; text-align: center; text-align-last: center; }
.clr span { display: flex; align-items: center; justify-content: center; width: 18px; border: 1px solid #777; background: linear-gradient(#f2f2f2 50%, #d4d4d4); pointer-events: none; }
.clr span::after { content: ""; border: 4px solid transparent; border-top-color: #000; border-bottom: 0; }
.right { width: 255px; }
.head { display: flex; align-items: center; gap: 5px; line-height: 17px; }
.head::after { content: ""; flex: 1; height: 1px; background: #dcdcdc; }
.presets { display: flex; gap: 11px; padding: 8px 0 8px 43px; }
.presets > div { display: flex; flex-direction: column; align-items: center; width: 52px; gap: 5px; white-space: nowrap; }
.pb { display: flex; align-items: center; justify-content: center; width: 52px; height: 43px; border: 1px solid #777; border-radius: 3px; padding-bottom: 4px; background: linear-gradient(#f2f2f2 45%, #dedede 50%, #cfcfcf); }
.disabled { color: #838383; }
.disabled .pb { border-color: #b5b2b9; background: #f4f4f4; }
.borders { display: grid; grid-template-columns: 22px 180px 22px; grid-template-rows: 112px 24px; gap: 6px 10px; padding: 7px 0 0 10px; }
.vcol { display: flex; flex-direction: column; justify-content: space-between; }
.hrow { display: flex; justify-content: space-between; padding: 0 1px; }
.sb { display: flex; align-items: center; justify-content: center; width: 22px; height: 24px; border: 1px solid #777; border-radius: 3px; background: linear-gradient(#f2f2f2 45%, #dedede 50%, #d0d0d0); }
.diag { grid-column: 1; }
.sb.down { border-color: #2c628b; background: linear-gradient(#d5eaf7 40%, #8fcbec 50%, #64b1dc); }
.sb.focus { background: linear-gradient(#9cc4de 40%, #6fa9cd 50%, #5d9ac0); }
.sb.off { border-color: #b8b5bc; background: #f4f4f4; }
.off svg { opacity: .4; }
.pv { width: 180px; height: 112px; font-size: 12px; }
.hint { margin: 16px 0 0; }
.actions { display: flex; justify-content: flex-end; gap: 10px; padding-top: 10px; }
.actions button { width: 74px; height: 25px; border: 1px solid #777; border-radius: 3px; background: linear-gradient(#f3f3f3 45%, #dedede 50%, #d2d2d2); }
.actions .ok { border: 2px solid #36a3cf; }

/* Callouts and stamp laid over the window */
.marks { position: absolute; left: -1px; top: -1px; pointer-events: none; }
.stamp { position: absolute; right: 16px; bottom: 8px; font-size: 30px; line-height: 40px; font-weight: 300; color: #fff; text-shadow: 1px 1px 1px #333, 0 0 1px #444; white-space: nowrap; pointer-events: none; }
```
